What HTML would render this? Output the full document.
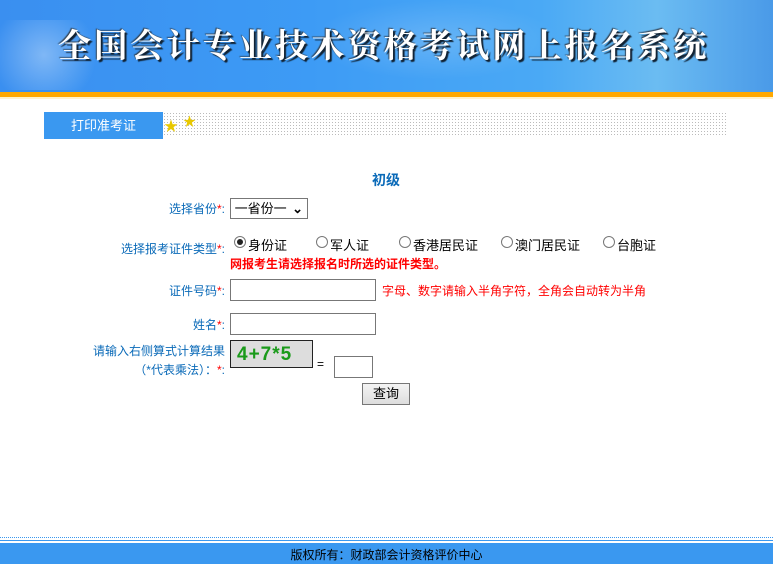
<!DOCTYPE html>
<html><head><meta charset="utf-8"><style>
body{margin:0;width:773px;height:564px;position:relative;overflow:hidden;background:#fff;font-family:"Liberation Sans","Noto Sans CJK SC",sans-serif;font-size:12px}
.a{position:absolute;white-space:nowrap}
.lbl{color:#0a6ab8;text-align:right;width:200px}
.r{color:#f00}
.inp{position:absolute;border:1px solid #777;background:#fff;height:20px}
.rad{position:absolute;width:10px;height:10px;border:1px solid #777;border-radius:50%;background:#fff}
</style></head><body>
<div class="a" style="left:0;top:0;width:773px;height:92px;background:linear-gradient(90deg,#3a8ff0 0%,#3d9bf5 40%,#4aa9f5 70%,#6bbcf2 85%,#4a9ae8 100%)"></div>
<div class="a" style="left:0;top:20px;width:110px;height:70px;background:radial-gradient(circle at 40% 50%,rgba(255,255,255,.35),rgba(255,255,255,0) 70%)"></div>
<div class="a" style="left:310px;top:0;width:250px;height:80px;background:radial-gradient(ellipse,rgba(255,255,255,.18),rgba(255,255,255,0) 70%)"></div>
<div class="a" style="left:58px;top:20px;font-size:33px;font-weight:bold;color:#fff;letter-spacing:3.2px;font-family:'Noto Serif CJK SC',serif;text-shadow:2px 2px 1px #123,-1px -1px 1px #345">全国会计专业技术资格考试网上报名系统</div>
<div class="a" style="left:0;top:92px;width:773px;height:5px;background:#ffa800"></div>
<div class="a" style="left:0;top:97px;width:773px;height:2px;background:#fff2cc"></div>
<div class="a" style="left:44px;top:112px;width:119px;height:27px;background:#3a98f0;color:#fff;font-size:13px;line-height:27px;text-align:center">打印准考证</div>
<div class="a" style="left:163px;top:112px;width:565px;height:24px;background-image:radial-gradient(#bbb 0.6px,transparent 0.7px);background-size:3px 3px"></div>
<div class="a" style="left:164px;top:116px;color:#e8c800;font-size:14px">★</div>
<div class="a" style="left:183px;top:111px;color:#e8c800;font-size:13px">★</div>
<div class="a" style="left:372px;top:170px;color:#0a6ab8;font-size:14px;font-weight:bold">初级</div>
<div class="a lbl" style="left:25px;top:200px">选择省份<span class="r">*</span>:</div>
<div class="a" style="left:230px;top:198px;width:76px;height:19px;border:1px solid #777;font-size:13px;line-height:19px">&nbsp;一省份一 <span style="position:absolute;right:4px;font-weight:bold">⌄</span></div>
<div class="a lbl" style="left:25px;top:240px">选择报考证件类型<span class="r">*</span>:</div>
<div class="rad" style="left:234px;top:236px"><div style="margin:2px;width:6px;height:6px;border-radius:50%;background:#222"></div></div>
<div class="a" style="left:248px;top:235px;font-size:13px">身份证</div>
<div class="rad" style="left:316px;top:236px"></div><div class="a" style="left:330px;top:235px;font-size:13px">军人证</div>
<div class="rad" style="left:399px;top:236px"></div><div class="a" style="left:413px;top:235px;font-size:13px">香港居民证</div>
<div class="rad" style="left:501px;top:236px"></div><div class="a" style="left:515px;top:235px;font-size:13px">澳门居民证</div>
<div class="rad" style="left:603px;top:236px"></div><div class="a" style="left:617px;top:235px;font-size:13px">台胞证</div>
<div class="a r" style="left:230px;top:255px;font-weight:bold">网报考生请选择报名时所选的证件类型。</div>
<div class="a lbl" style="left:25px;top:282px">证件号码<span class="r">*</span>:</div>
<div class="inp" style="left:230px;top:279px;width:144px"></div>
<div class="a r" style="left:382px;top:282px">字母、数字请输入半角字符，全角会自动转为半角</div>
<div class="a lbl" style="left:25px;top:316px">姓名<span class="r">*</span>:</div>
<div class="inp" style="left:230px;top:313px;width:144px"></div>
<div class="a lbl" style="left:25px;top:342px">请输入右侧算式计算结果</div>
<div class="a lbl" style="left:25px;top:361px">（<span style="color:#0a6ab8">*</span>代表乘法）：<span class="r">*</span>:</div>
<div class="a" style="left:230px;top:340px;width:83px;height:28px;background:#ddd;border:1px solid #222;color:#1a9a1a;font-size:19px;font-weight:bold;line-height:28px;padding-left:6px;box-sizing:border-box;letter-spacing:1px">4+7*5</div>
<div class="a" style="left:317px;top:357px">=</div>
<div class="inp" style="left:334px;top:356px;width:37px"></div>
<div class="a" style="left:362px;top:383px;width:46px;height:20px;border:1px solid #777;background:linear-gradient(#f4f4f4,#ddd);text-align:center;line-height:20px;font-size:13px">查询</div>
<div class="a" style="left:0;top:537px;width:773px;border-top:1px dotted #3a98f0"></div>
<div class="a" style="left:0;top:540px;width:773px;height:1px;background:#3a98f0"></div>
<div class="a" style="left:0;top:543px;width:773px;height:21px;background:#3a98f0;text-align:center;line-height:24px;font-size:12px;color:#000">版权所有：财政部会计资格评价中心</div>
</body></html>
